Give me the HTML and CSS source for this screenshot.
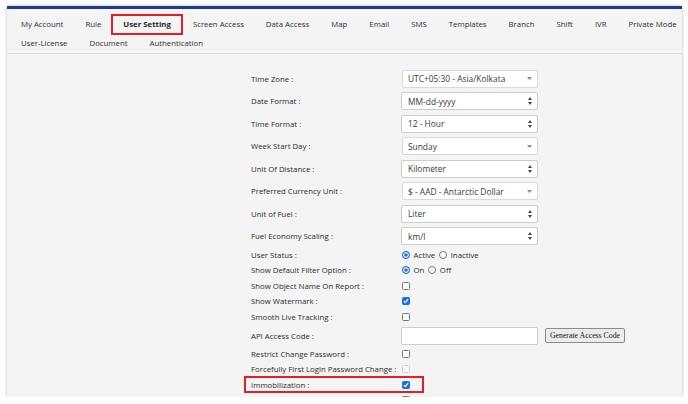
FILE: index.html
```html
<!DOCTYPE html>
<html lang="en">
<head>
<meta charset="utf-8">
<title>User Setting</title>
<link rel="stylesheet" href="styles.css">
</head>
<body>
<div class="page">
  <div class="panel">
    <nav class="tabs">
      <div class="tab-row">
        <span class="tab">My Account</span>
        <span class="tab">Rule</span>
        <span class="tab active">User Setting</span>
        <span class="tab">Screen Access</span>
        <span class="tab">Data Access</span>
        <span class="tab">Map</span>
        <span class="tab">Email</span>
        <span class="tab">SMS</span>
        <span class="tab">Templates</span>
        <span class="tab">Branch</span>
        <span class="tab">Shift</span>
        <span class="tab">IVR</span>
        <span class="tab">Private Mode</span>
      </div>
      <div class="tab-row">
        <span class="tab">User-License</span>
        <span class="tab">Document</span>
        <span class="tab">Authentication</span>
      </div>
    </nav>

    <div class="form">
      <div class="row sel">
        <span class="lbl">Time Zone :</span>
        <div class="select s2"><span>UTC+05:30 - Asia/Kolkata</span><svg class="arr1" width="5" height="3" viewBox="0 0 5 3"><path d="M0 0h5L2.5 3z"/></svg></div>
      </div>
      <div class="row sel">
        <span class="lbl">Date Format :</span>
        <div class="select"><span>MM-dd-yyyy</span><svg class="arr2" width="4" height="8" viewBox="0 0 4 8"><path d="M2 0L4 3H0zM2 8L0 5h4z"/></svg></div>
      </div>
      <div class="row sel">
        <span class="lbl">Time Format :</span>
        <div class="select"><span>12 - Hour</span><svg class="arr2" width="4" height="8" viewBox="0 0 4 8"><path d="M2 0L4 3H0zM2 8L0 5h4z"/></svg></div>
      </div>
      <div class="row sel">
        <span class="lbl">Week Start Day :</span>
        <div class="select s2"><span>Sunday</span><svg class="arr1" width="5" height="3" viewBox="0 0 5 3"><path d="M0 0h5L2.5 3z"/></svg></div>
      </div>
      <div class="row sel">
        <span class="lbl">Unit Of Distance :</span>
        <div class="select"><span>Kilometer</span><svg class="arr2" width="4" height="8" viewBox="0 0 4 8"><path d="M2 0L4 3H0zM2 8L0 5h4z"/></svg></div>
      </div>
      <div class="row sel">
        <span class="lbl">Preferred Currency Unit :</span>
        <div class="select s2"><span>$ - AAD - Antarctic Dollar</span><svg class="arr1" width="5" height="3" viewBox="0 0 5 3"><path d="M0 0h5L2.5 3z"/></svg></div>
      </div>
      <div class="row sel">
        <span class="lbl">Unit of Fuel :</span>
        <div class="select"><span>Liter</span><svg class="arr2" width="4" height="8" viewBox="0 0 4 8"><path d="M2 0L4 3H0zM2 8L0 5h4z"/></svg></div>
      </div>
      <div class="row sel">
        <span class="lbl">Fuel Economy Scaling :</span>
        <div class="select"><span>km/l</span><svg class="arr2" width="4" height="8" viewBox="0 0 4 8"><path d="M2 0L4 3H0zM2 8L0 5h4z"/></svg></div>
      </div>

      <div class="row chk">
        <span class="lbl">User Status :</span>
        <div class="opts">
          <span class="rd on"></span><span class="opt-text">Active</span>
          <span class="rd"></span><span class="opt-text">Inactive</span>
        </div>
      </div>
      <div class="row chk">
        <span class="lbl">Show Default Filter Option :</span>
        <div class="opts">
          <span class="rd on"></span><span class="opt-text">On</span>
          <span class="rd"></span><span class="opt-text">Off</span>
        </div>
      </div>
      <div class="row chk">
        <span class="lbl">Show Object Name On Report :</span>
        <span class="cb"></span>
      </div>
      <div class="row chk">
        <span class="lbl">Show Watermark :</span>
        <span class="cb on"><svg width="6" height="6" viewBox="0 0 6 6"><path d="M0.9 3.1L2.4 4.6L5.1 1.2"/></svg></span>
      </div>
      <div class="row chk">
        <span class="lbl">Smooth Live Tracking :</span>
        <span class="cb"></span>
      </div>
      <div class="row api">
        <span class="lbl">API Access Code :</span>
        <span class="text-input"></span>
        <button class="gen-btn" type="button">Generate Access Code</button>
      </div>
      <div class="row chk">
        <span class="lbl">Restrict Change Password :</span>
        <span class="cb"></span>
      </div>
      <div class="row chk">
        <span class="lbl">Forcefully First Login Password Change :</span>
        <span class="cb dis"></span>
      </div>
      <div class="row chk hl">
        <span class="lbl">Immobilization :</span>
        <span class="cb on"><svg width="6" height="6" viewBox="0 0 6 6"><path d="M0.9 3.1L2.4 4.6L5.1 1.2"/></svg></span>
      </div>
      <div class="row chk">
        <span class="lbl"></span>
        <span class="cb"></span>
      </div>
    </div>
  </div>
</div>
</body>
</html>
```

FILE: styles.css
```css
html, body {
  margin: 0;
  background: #ffffff;
}

body {
  font-family: "Open Sans", "Noto Sans", sans-serif;
  color: #2a2a2a;
}

.page {
  padding: 6px 6px 0 7px;
}

.panel {
  box-sizing: border-box;
  height: 391px;
  background: #f4f4f4;
  border-top: 3px solid #1f3a8a;
  box-shadow: 0 0 3px rgba(0, 0, 0, 0.28);
  overflow: hidden;
}

/* ---------- tabs ---------- */
.tabs {
  padding: 5.5px 0 0 3px;
  border-bottom: 1px solid #dddddd;
}

.tab-row {
  display: flex;
  height: 19px;
}

.tab {
  position: relative;
  flex-shrink: 0;
  padding: 0 11px;
  line-height: 19px;
  font-size: 7.8px;
  font-weight: 500;
  color: #2e2e2e;
  white-space: nowrap;
}

.tab.active {
  font-weight: 700;
  color: #1e1e1e;
}

.tab.active::after {
  content: "";
  position: absolute;
  top: -1px;
  bottom: -1px;
  left: -1px;
  right: -1px;
  border: 2px solid #e41e25;
}

/* ---------- form ---------- */
.form {
  display: flex;
  flex-direction: column;
  padding: 16px 0 0 244px;
}

.row {
  display: flex;
  align-items: center;
}

.row.sel {
  height: 18px;
}

.row.sel + .row.sel {
  margin-top: 4.5px;
}

.row.sel + .row.chk {
  margin-top: 1.75px;
}

.row.chk {
  height: 15.5px;
}

.row.api {
  height: 18px;
  margin: 2.25px 0 1.25px;
}

.lbl {
  flex-shrink: 0;
  width: 150px;
  font-size: 7.8px;
  font-weight: 500;
  color: #2a2a2a;
  white-space: nowrap;
}

.select {
  box-sizing: border-box;
  width: 137px;
  height: 18px;
  display: flex;
  align-items: center;
  justify-content: space-between;
  padding: 0 5px 0 6px;
  background: #ffffff;
  border: 1px solid #cccccc;
  border-radius: 2px;
  font-size: 8.4px;
  font-weight: 500;
  color: #3a3a3a;
  white-space: nowrap;
}

.select.s2 {
  width: 136px;
  margin-left: 1px;
  border-color: #dadada;
  padding-left: 5px;
}

.arr1 path {
  fill: #8a8a8a;
}

.arr2 path {
  fill: #444444;
}

/* radios and checkboxes */
.opts {
  display: flex;
  align-items: center;
  margin-left: 1px;
  font-size: 7.8px;
  font-weight: 500;
  color: #2a2a2a;
}

.opt-text {
  margin: 0 4px 0 3.5px;
}

.rd {
  box-sizing: border-box;
  width: 8px;
  height: 8px;
  border-radius: 50%;
  border: 1px solid #767676;
  background: #ffffff;
}

.rd.on {
  border-color: #1a6fe3;
  background: #1a6fe3;
  box-shadow: inset 0 0 0 1.2px #ffffff;
}

.cb {
  box-sizing: border-box;
  width: 8px;
  height: 8px;
  margin-left: 1px;
  border: 1px solid #767676;
  border-radius: 1.5px;
  background: #ffffff;
  display: flex;
  align-items: center;
  justify-content: center;
}

.cb.on {
  background: #1a6fe3;
  border-color: #1a6fe3;
}

.cb svg path {
  fill: none;
  stroke: #ffffff;
  stroke-width: 1.2;
}

.cb.dis {
  border-color: #d2d2d2;
  background: #f8f8f8;
}

.text-input {
  box-sizing: border-box;
  width: 137px;
  height: 18px;
  background: #ffffff;
  border: 1px solid #cccccc;
  border-radius: 2px;
}

.gen-btn {
  box-sizing: border-box;
  height: 15px;
  width: 80px;
  margin-left: 7px;
  padding: 0;
  font-family: "Liberation Serif", "Times New Roman", serif;
  font-size: 7.8px;
  color: #111111;
  white-space: nowrap;
  background: #ececec;
  border: 1px solid #8a8a8a;
  border-radius: 2px;
}

.row.hl {
  position: relative;
}

.row.hl::after {
  content: "";
  position: absolute;
  left: -7px;
  top: -0.5px;
  width: 180px;
  height: 17px;
  box-sizing: border-box;
  border: 2px solid #e41e25;
}
```
